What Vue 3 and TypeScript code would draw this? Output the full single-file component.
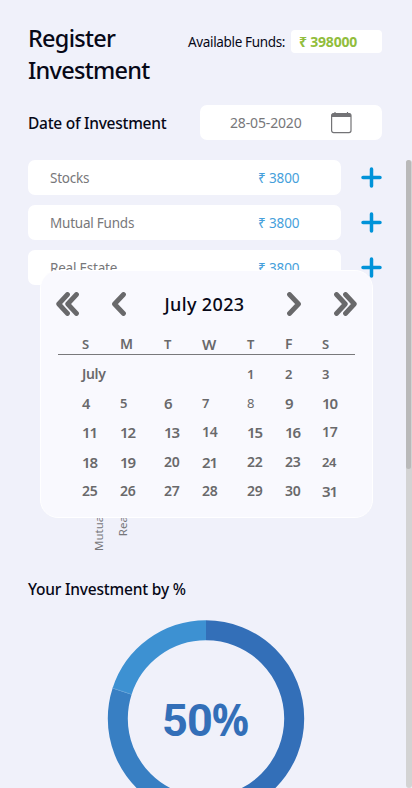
<script setup lang="ts">
interface DayCell {
  label: string
  size: number
  light?: boolean
}

const investments = ['Stocks', 'Mutual Funds', 'Real Estate']

const weekdays: DayCell[] = [
  { label: 'S', size: 13 },
  { label: 'M', size: 14 },
  { label: 'T', size: 13 },
  { label: 'W', size: 15 },
  { label: 'T', size: 13 },
  { label: 'F', size: 14 },
  { label: 'S', size: 13 },
]

const sizes: number[][] = [
  [13, 13, 13, 13, 13, 13, 13],
  [14.5, 13, 15, 13, 13, 15, 15],
  [15, 15, 15, 14, 15, 15, 14],
  [15, 15, 14, 15, 14, 14, 13],
  [14, 14, 14, 14, 14, 14, 15],
]

const weeks: DayCell[][] = sizes.map((row, w) =>
  row.map((size, d) => {
    const day = w * 7 + d - 3
    return { label: day > 0 ? String(day) : '', size, light: day === 8 }
  }),
)
weeks[0][0] = { label: 'July', size: 14 }
</script>

<template>
  <main class="screen">
    <header class="top">
      <h1 class="title">Register<br />Investment</h1>
      <div class="funds">
        <span class="funds-label">Available Funds:</span>
        <span class="funds-value">₹ 398000</span>
      </div>
    </header>

    <section class="date-row">
      <h2 class="heading date-heading">Date of Investment</h2>
      <div class="date-field">
        <span class="date-text">28-05-2020</span>
        <svg class="cal-icon" width="22" height="22" viewBox="0 0 22 22">
          <rect x="1.600" y="1.600" width="19.400" height="19" rx="2" fill="none" stroke="#737376" stroke-width="1.200" />
          <path d="M1.500 5V3.500Q1.500 1.200 3.500 1.200H19Q21 1.200 21 3.500V5Z" fill="#737376" />
          <path d="M5 0V2M17.500 0V2" stroke="#737376" stroke-width="1.200" />
        </svg>
      </div>
    </section>

    <section class="list">
      <div v-for="name in investments" :key="name" class="item">
        <div class="item-card">
          <span>{{ name }}</span>
          <span class="amount">₹ 3800</span>
        </div>
        <svg class="plus" width="22" height="22" viewBox="0 0 22 22">
          <path d="M11.500 2V19M3 10.500H20" stroke="#0093d9" stroke-width="3.500" stroke-linecap="round" />
        </svg>
      </div>
    </section>

    <section class="axis">
      <span class="axis-label">Mutual Funds</span>
      <span class="axis-label">Real Estate</span>
    </section>

    <h2 class="heading share-heading">Your Investment by %</h2>
    <div class="donut">
      <svg width="198" height="198" viewBox="0 0 198 198">
        <g fill="none" stroke-width="20" transform="rotate(-90 99 98.500)">
          <circle cx="99" cy="98.500" r="88.200" stroke="#336fb8" pathLength="100" stroke-dasharray="50 50" />
          <circle cx="99" cy="98.500" r="88.200" stroke="#387fc3" pathLength="100" stroke-dasharray="30.200 69.800" stroke-dashoffset="-49.800" />
          <circle cx="99" cy="98.500" r="88.200" stroke="#3d91d2" pathLength="100" stroke-dasharray="20 80" stroke-dashoffset="-80" />
        </g>
        <path d="M5.300 68L24.300 74.200" stroke="#67a5d9" stroke-width=".6" />
      </svg>
      <span class="percent">50<span class="percent-sign">%</span></span>
    </div>

    <aside class="calendar">
      <nav class="cal-nav">
        <svg width="24" height="24" viewBox="0 0 24 24" class="chev">
          <path d="M11.500 2.500L2.700 12L11.500 21.500M20.500 2.500L11.700 12L20.500 21.500" />
        </svg>
        <svg width="15" height="24" viewBox="0 0 15 24" class="chev">
          <path d="M11.500 2.500L2.500 12L11.500 21.500" />
        </svg>
        <span class="month">July 2023</span>
        <svg width="15" height="24" viewBox="0 0 15 24" class="chev">
          <path d="M3.500 2.500L12.500 12L3.500 21.500" />
        </svg>
        <svg width="24" height="24" viewBox="0 0 24 24" class="chev">
          <path d="M3.500 2.500L12.300 12L3.500 21.500M12.500 2.500L21.300 12L12.500 21.500" />
        </svg>
      </nav>
      <div class="week weekdays">
        <span v-for="(d, i) in weekdays" :key="i" class="day" :style="{ fontSize: d.size + 'px' }">{{ d.label }}</span>
      </div>
      <div v-for="(week, w) in weeks" :key="w" class="week">
        <span
          v-for="(d, i) in week"
          :key="i"
          class="day"
          :class="{ light: d.light, tight: d.size >= 15 }"
          :style="{ fontSize: d.size + 'px' }"
        >{{ d.label }}</span>
      </div>
    </aside>

    <div class="scrollbar"><div class="thumb"></div></div>
  </main>
</template>

<style>
body {
  background: #f0f1fa;
}
</style>

<style scoped>
.screen {
  position: relative;
  width: 412px;
  height: 788px;
  box-sizing: border-box;
  padding: 22px 30px 0 28px;
  overflow: hidden;
  background: #f0f1fa;
  color: #070817;
  font-family: 'Noto Sans', 'Open Sans', sans-serif;
}
.top {
  display: flex;
  justify-content: space-between;
  height: 83px;
}
.title {
  margin: 0;
  font-size: 23.5px;
  line-height: 32px;
  font-weight: 500;
  letter-spacing: -0.74px;
}
.funds {
  display: flex;
  align-items: center;
  gap: 5px;
  height: 23px;
  margin-top: 8px;
  white-space: nowrap;
}
.funds-label {
  width: 98px;
  font-size: 13.5px;
  letter-spacing: -0.34px;
}
.funds-value {
  box-sizing: border-box;
  width: 91px;
  padding-left: 8px;
  border-radius: 4px;
  background: #fff;
  color: #91bd3c;
  font-size: 14px;
  line-height: 23px;
  font-weight: 700;
  letter-spacing: -0.2px;
}
.date-row {
  display: flex;
  align-items: center;
  justify-content: space-between;
  height: 35px;
}
.heading {
  margin: 0;
  font-size: 15.5px;
  line-height: 22px;
  font-weight: 500;
  white-space: nowrap;
}
.date-heading {
  letter-spacing: -0.26px;
}
.date-field {
  display: flex;
  align-items: center;
  justify-content: space-between;
  box-sizing: border-box;
  width: 182px;
  height: 35px;
  padding: 0 30px;
  border-radius: 7px;
  background: #fff;
  color: #77777a;
  font-size: 14px;
}
.date-text {
  letter-spacing: -0.15px;
}
.list {
  display: flex;
  flex-direction: column;
  gap: 10px;
  margin-top: 20px;
}
.item {
  display: flex;
  align-items: center;
  justify-content: space-between;
  height: 35px;
}
.item-card {
  display: grid;
  grid-template-columns: 208px 1fr;
  align-items: center;
  box-sizing: border-box;
  width: 313px;
  height: 35px;
  padding-left: 22px;
  border-radius: 7px;
  background: #fff;
  color: #77777a;
  font-size: 13.5px;
  letter-spacing: -0.22px;
}
.amount {
  color: #469fdb;
  letter-spacing: -0.12px;
}
.axis {
  display: flex;
  align-items: flex-start;
  gap: 8px;
  height: 101px;
  margin: 192px 0 0 63px;
  color: #77777a;
  font-size: 11.5px;
  line-height: 16px;
}
.axis-label {
  writing-mode: vertical-rl;
  transform: rotate(180deg);
  white-space: nowrap;
}
.share-heading {
  letter-spacing: -0.2px;
}
.donut {
  display: grid;
  place-items: center;
  width: 198px;
  height: 198px;
  margin: 20px 0 0 79px;
}
.donut > * {
  grid-area: 1 / 1;
}
.percent {
  display: flex;
  align-items: baseline;
  width: 88px;
  padding-top: 2px;
  color: #336fb8;
  font-family: Roboto, sans-serif;
  font-size: 45px;
  line-height: 46px;
  font-weight: 700;
  letter-spacing: -0.8px;
}
.percent-sign {
  font-family: 'Noto Sans', 'Open Sans', sans-serif;
  font-size: 44.5px;
  letter-spacing: 0;
  transform: scaleX(0.92);
  transform-origin: left;
}
.calendar {
  position: absolute;
  left: 40px;
  top: 270px;
  box-sizing: border-box;
  width: 333px;
  height: 248px;
  padding: 21px 15px 0;
  border: 1px solid #fff;
  border-radius: 18px;
  background: #f9f9fe;
  color: #69696b;
}
.cal-nav {
  display: grid;
  grid-template-columns: 24px 15px 1fr 15px 24px;
  column-gap: 32px;
  align-items: center;
  height: 24px;
}
.chev {
  fill: none;
  stroke: #69696b;
  stroke-width: 4.8;
  stroke-linecap: round;
  stroke-linejoin: round;
}
.month {
  margin: 0 -10px 0 -14px;
  color: #070817;
  font-size: 18px;
  line-height: 24px;
  font-weight: 500;
  letter-spacing: 0.35px;
  text-align: center;
  white-space: nowrap;
}
.week {
  display: grid;
  grid-template-columns: 38px 44px 38px 45px 38px 37px 32px;
  align-items: center;
  height: 29.3px;
  padding-left: 26px;
  line-height: 20px;
  font-weight: 600;
}
.weekdays {
  box-sizing: border-box;
  height: 22px;
  margin: 17px 2px 4px;
  padding-left: 24px;
  border-bottom: 1px solid #79797b;
}
.day {
  letter-spacing: -0.35px;
  white-space: nowrap;
}
.tight {
  letter-spacing: -1px;
}
.light {
  font-weight: 400;
}
.scrollbar {
  position: absolute;
  top: 160px;
  right: 0;
  width: 6px;
  height: 628px;
  border-radius: 3px;
  background: #d3d3d3;
}
.thumb {
  width: 5px;
  height: 309px;
  border-radius: 3px;
  background: #b9b9b9;
}
</style>
